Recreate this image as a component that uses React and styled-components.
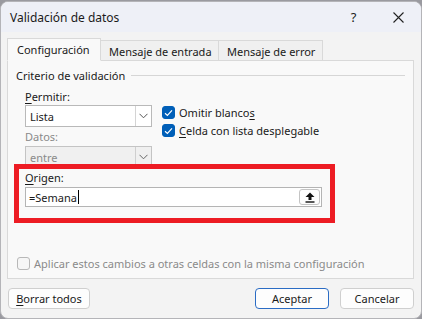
import React from "react";
import styled, { createGlobalStyle } from "styled-components";

const Global = createGlobalStyle`
  html, body { margin: 0; padding: 0; }
  body {
    width: 422px; height: 319px; overflow: hidden;
    background: #9a9aa0;
    font-family: "Noto Sans", "Segoe UI", sans-serif;
    font-size: 11px; color: #1a1a1a;
  }
  * { box-sizing: border-box; }
`;

const Window = styled.div`
  margin-top: 1px;
  width: 422px;
  height: 318px;
  border: 1px solid #b4b4b8;
  border-radius: 8px;
  background: #f3f3f3;
  overflow: hidden;
  display: flex;
  flex-direction: column;
`;

const TitleBar = styled.div`
  height: 30px;
  background: #eef0f7;
  display: flex;
  align-items: center;
  padding-left: 9px;
  flex-shrink: 0;
`;
const Title = styled.div`
  flex: 1;
  font-size: 12px;
  color: #1b1b1b;
`;
const TitleBtn = styled.div`
  width: 45px;
  height: 30px;
  display: flex;
  align-items: center;
  justify-content: center;
  font-size: 13px;
  color: #222;
`;

const Body = styled.div`
  flex: 1;
  padding: 6px 7px 0 6px;
  display: flex;
  flex-direction: column;
`;

const TabRow = styled.div`
  display: flex;
  align-items: flex-end;
  height: 23px;
  margin-bottom: -1px;
  position: relative;
  z-index: 1;
`;
const Tab = styled.div`
  width: ${(p) => p.$w}px;
  height: ${(p) => (p.$active ? 23 : 21)}px;
  padding-left: ${(p) => p.$pad}px;
  display: flex;
  align-items: center;
  border: 1px solid #d9d9d9;
  border-bottom: 1px solid ${(p) => (p.$active ? "#f9f9f9" : "#d9d9d9")};
  border-left: ${(p) => (p.$first ? "1px solid #d9d9d9" : "none")};
  background: ${(p) => (p.$active ? "#f9f9f9" : "#f0f0f0")};
  color: #1a1a1a;
  white-space: nowrap;
  padding-top: ${(p) => (p.$active ? 0 : 1)}px;
`;

const Panel = styled.div`
  height: 219px;
  border: 1px solid #d9d9d9;
  background: #f9f9f9;
  padding: 5px 8px 0 8px;
  display: flex;
  flex-direction: column;
`;

const Legend = styled.div`
  display: flex;
  align-items: center;
  height: 18px;
  gap: 6px;
  color: #1a1a1a;
  &::after {
    content: "";
    flex: 1;
    height: 1px;
    background: #d6d6d6;
    margin-top: 1px;
  }
`;

const CriteriaRow = styled.div`
  display: flex;
  padding-left: 9px;
  margin-top: 5px;
  gap: 10px;
`;
const LeftCol = styled.div`
  display: flex;
  flex-direction: column;
  width: 127px;
`;
const RightCol = styled.div`
  display: flex;
  flex-direction: column;
  padding-top: 17px;
  gap: 5px;
`;

const Label = styled.div`
  height: 16px;
  line-height: 16px;
  color: ${(p) => (p.$disabled ? "#8a8a8a" : "#1a1a1a")};
  margin-top: ${(p) => p.$mt || 0}px;
`;
const U = styled.span`
  text-decoration: underline;
  text-underline-offset: 2px;
`;

const Select = styled.div`
  height: 22px;
  margin-top: ${(p) => p.$mt || 0}px;
  border: 1px solid ${(p) => (p.$disabled ? "#c4c4c4" : "#b9b9b9")};
  background: ${(p) => (p.$disabled ? "#f0f0f0" : "#ffffff")};
  display: flex;
  align-items: stretch;
  color: ${(p) => (p.$disabled ? "#8a8a8a" : "#1a1a1a")};
`;
const SelectText = styled.div`
  flex: 1;
  display: flex;
  align-items: center;
  padding-left: 4px;
`;
const SelectArrow = styled.div`
  width: 16px;
  border-left: 1px solid ${(p) => (p.$disabled ? "#cfcfcf" : "#d4d4d4")};
  display: flex;
  align-items: center;
  justify-content: center;
  background: ${(p) => (p.$disabled ? "#f0f0f0" : "#ffffff")};
`;

const CheckRow = styled.div`
  display: flex;
  align-items: center;
  gap: 4px;
  height: 13px;
  color: ${(p) => (p.$disabled ? "#8a8a8a" : "#1a1a1a")};
`;
const Box = styled.div`
  width: 13px;
  height: 13px;
  border-radius: 3px;
  background: ${(p) => (p.$checked ? "#005fb8" : "#f6f6f6")};
  border: 1px solid ${(p) => (p.$checked ? "#005fb8" : "#b8b8b8")};
  display: flex;
  align-items: center;
  justify-content: center;
  flex-shrink: 0;
`;

const OrigenSection = styled.div`
  position: relative;
  margin-left: 9px;
  margin-top: 2px;
  width: 297px;
`;
const Highlight = styled.div`
  position: absolute;
  left: -11px;
  top: -6px;
  right: -13px;
  bottom: -16px;
  border: 5px solid #ed1c24;
  pointer-events: none;
`;
const InputBox = styled.div`
  height: 20px;
  margin-top: 1px;
  border: 1px solid #b4b4b4;
  background: #fff;
  display: flex;
  align-items: center;
  padding-left: 3px;
  padding-right: 1px;
`;
const InputText = styled.div`
  flex: 1;
  display: flex;
  align-items: center;
`;
const Caret = styled.span`
  display: inline-block;
  width: 1px;
  height: 14px;
  background: #000;
  margin-left: 1px;
`;
const UploadBtn = styled.div`
  width: 21px;
  height: 16px;
  border: 1px solid #c4c4c4;
  border-radius: 3px;
  background: #fdfdfd;
  display: flex;
  align-items: center;
  justify-content: center;
`;

const Spacer = styled.div`
  flex: 1;
`;
const ApplyRow = styled.div`
  padding-bottom: 8px;
  padding-left: 1px;
`;

const Footer = styled.div`
  display: flex;
  align-items: center;
  height: 21px;
  margin-top: 9px;
  gap: 11px;
  padding-left: 1px;
`;
const Button = styled.div`
  width: ${(p) => p.$w}px;
  height: 21px;
  border: 1px solid ${(p) => (p.$primary ? "#2b6cc4" : "#cfcfcf")};
  border-radius: 4px;
  background: #fdfdfd;
  display: flex;
  align-items: center;
  justify-content: center;
  color: #1a1a1a;
  margin-left: ${(p) => (p.$push ? "auto" : "0")};
`;

const Chevron = ({ color }) => (
  <svg width="9" height="6" viewBox="0 0 9 6">
    <path d="M0.5 0.8 L4.5 4.8 L8.5 0.8" fill="none" stroke={color} strokeWidth="1" />
  </svg>
);

const Check = () => (
  <svg width="9" height="8" viewBox="0 0 9 8">
    <path d="M1 4.2 L3.4 6.4 L8 1.4" fill="none" stroke="#fff" strokeWidth="1.2" />
  </svg>
);

export default function App() {
  return (
    <>
      <Global />
      <Window>
        <TitleBar>
          <Title>Validación de datos</Title>
          <TitleBtn>?</TitleBtn>
          <TitleBtn>
            <svg width="11" height="11" viewBox="0 0 11 11">
              <path d="M0.5 0.5 L10.5 10.5 M10.5 0.5 L0.5 10.5" stroke="#222" strokeWidth="1.1" />
            </svg>
          </TitleBtn>
        </TitleBar>
        <Body>
          <TabRow>
            <Tab $active $first $w={94} $pad={9}>Configuración</Tab>
            <Tab $w={118} $pad={8}>Mensaje de entrada</Tab>
            <Tab $w={104} $pad={8}>Mensaje de error</Tab>
          </TabRow>
          <Panel>
            <Legend>Criterio de validación</Legend>
            <CriteriaRow>
              <LeftCol>
                <Label><U>P</U>ermitir:</Label>
                <Select>
                  <SelectText>Lista</SelectText>
                  <SelectArrow><Chevron color="#555" /></SelectArrow>
                </Select>
                <Label $disabled $mt={2}>Datos:</Label>
                <Select $disabled $mt={1}>
                  <SelectText>entre</SelectText>
                  <SelectArrow $disabled><Chevron color="#666" /></SelectArrow>
                </Select>
              </LeftCol>
              <RightCol>
                <CheckRow>
                  <Box $checked><Check /></Box>
                  <span>Omitir blanco<U>s</U></span>
                </CheckRow>
                <CheckRow>
                  <Box $checked><Check /></Box>
                  <span><U>C</U>elda con lista desplegable</span>
                </CheckRow>
              </RightCol>
            </CriteriaRow>
            <OrigenSection>
              <Label><U>O</U>rigen:</Label>
              <InputBox>
                <InputText>=Semana<Caret /></InputText>
                <UploadBtn>
                  <svg width="10" height="11" viewBox="0 0 10 11">
                    <path d="M5 0.5 L9.5 5 L6.5 5 L6.5 8 L3.5 8 L3.5 5 L0.5 5 Z" fill="#111" />
                    <rect x="0.5" y="9.3" width="9" height="1.4" fill="#111" />
                  </svg>
                </UploadBtn>
              </InputBox>
              <Highlight />
            </OrigenSection>
            <Spacer />
            <ApplyRow>
              <CheckRow $disabled>
                <Box />
                <span>Aplicar estos cambios a otras celdas con la misma configuración</span>
              </CheckRow>
            </ApplyRow>
          </Panel>
          <Footer>
            <Button $w={82}><span><U>B</U>orrar todos</span></Button>
            <Button $w={74} $primary $push>Aceptar</Button>
            <Button $w={74}>Cancelar</Button>
          </Footer>
        </Body>
      </Window>
    </>
  );
}
